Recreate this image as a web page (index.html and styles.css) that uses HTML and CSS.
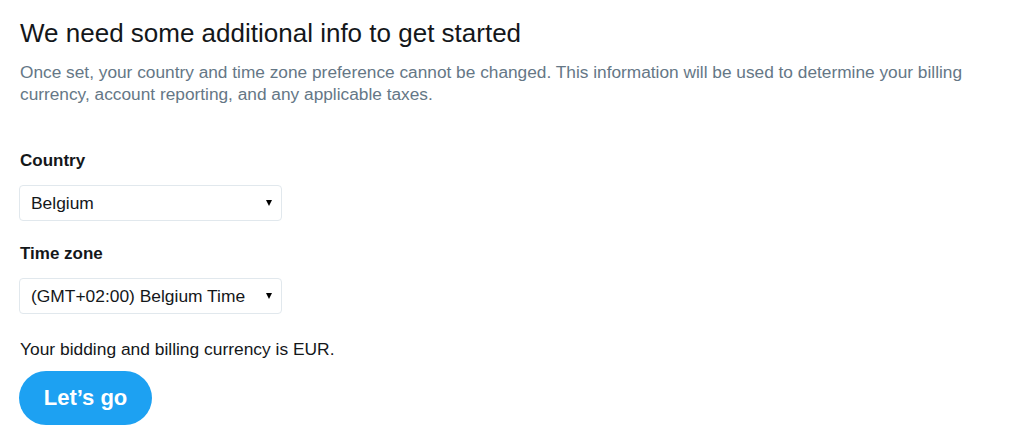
FILE: index.html
```html
<!DOCTYPE html>
<html>
<head>
<meta charset="utf-8">
<link rel="stylesheet" href="styles.css">
</head>
<body>
<main class="page">
  <h1 class="title">We need some additional info to get started</h1>
  <p class="intro">Once set, your country and time zone preference cannot be changed. This information will be used to determine your billing currency, account reporting, and any applicable taxes.</p>

  <div class="field field-first">
    <label class="label" for="country">Country</label>
    <div class="select-wrap">
      <select id="country" class="select">
        <option>Belgium</option>
      </select>
      <span class="arrow"></span>
    </div>
  </div>

  <div class="field">
    <label class="label" for="tz">Time zone</label>
    <div class="select-wrap">
      <select id="tz" class="select">
        <option>(GMT+02:00) Belgium Time</option>
      </select>
      <span class="arrow"></span>
    </div>
  </div>

  <p class="currency">Your bidding and billing currency is EUR.</p>
  <button class="btn" type="button">Let’s go</button>
</main>
</body>
</html>
```

FILE: styles.css
```css
html, body {
  margin: 0;
  padding: 0;
  background: #ffffff;
}

.page {
  padding: 18px 20px 0 20px;
  font-family: "Liberation Sans", Arial, sans-serif;
  color: #14171a;
}

.title {
  margin: 0;
  font-size: 26px;
  line-height: 30px;
  font-weight: normal;
  color: #14171a;
}

.intro {
  margin: 13px 0 0 0;
  font-size: 17.3px;
  line-height: 22px;
  color: #657786;
  max-width: 970px;
}

.field {
  margin-top: 23px;
}

.field-first {
  margin-top: 46px;
}

.label {
  display: block;
  font-size: 17px;
  line-height: 20px;
  font-weight: bold;
  color: #14171a;
}

.select-wrap {
  position: relative;
  width: 263px;
  margin-top: 14px;
  margin-left: -1px;
}

.select {
  -webkit-appearance: none;
  appearance: none;
  display: block;
  width: 100%;
  height: 36px;
  box-sizing: border-box;
  border: 1px solid #e1e8ed;
  border-radius: 4px;
  background: #ffffff;
  padding: 0 28px 0 11px;
  font-family: "Liberation Sans", Arial, sans-serif;
  font-size: 17.4px;
  color: #14171a;
  outline: none;
}

.arrow {
  position: absolute;
  right: 10px;
  top: 15px;
  width: 0;
  height: 0;
  border-left: 3.5px solid transparent;
  border-right: 3.5px solid transparent;
  border-top: 6px solid #000000;
  pointer-events: none;
}

.currency {
  margin: 25px 0 0 0;
  font-size: 17.4px;
  line-height: 20px;
  color: #14171a;
}

.btn {
  display: block;
  margin-top: 12px;
  margin-left: -1px;
  width: 133px;
  height: 54px;
  border: none;
  border-radius: 27px;
  background: #1da1f2;
  color: #ffffff;
  font-family: "Liberation Sans", Arial, sans-serif;
  font-size: 22px;
  font-weight: bold;
  cursor: pointer;
}
```
